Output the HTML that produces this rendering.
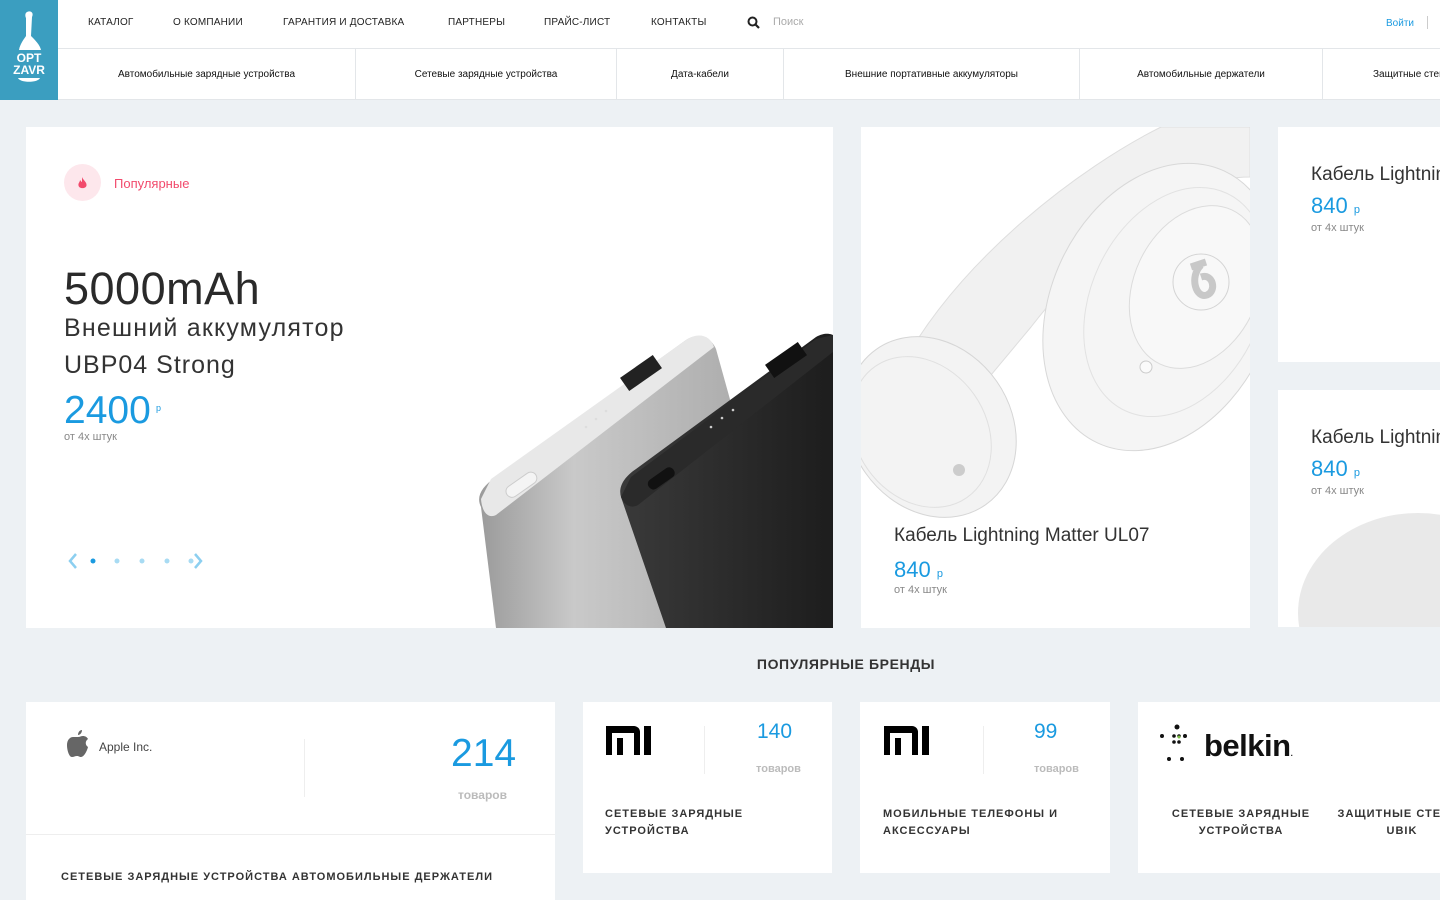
<!DOCTYPE html>
<html><head><meta charset="utf-8"><style>
*{margin:0;padding:0;box-sizing:border-box}
body{width:1440px;height:900px;overflow:hidden;background:#edf1f4;font-family:"Liberation Sans",sans-serif;position:relative;color:#333}
.a{position:absolute}
.hdr{left:0;top:0;width:1440px;height:100px;background:#fff;border-bottom:1px solid #e3e6e9}
.logo{left:0;top:0;width:58px;height:100px;background:#3b9ec0;color:#fff;font-weight:bold;font-size:12px;text-align:center;line-height:12px}
.nav{top:17px;font-size:10px;color:#222;letter-spacing:.2px}
.row2{left:58px;top:48px;width:1382px;height:51px;border-top:1px solid #e3e6e9}
.cat{top:0;height:51px;border-right:1px solid #e3e6e9;font-size:10px;color:#111;display:flex;align-items:center;justify-content:center}
.card{background:#fff}
.blue{color:#1a9ae0}
.small{font-size:11px;color:#888}
.bt{font-size:11px;font-weight:bold;letter-spacing:1px;color:#333;line-height:17px}
</style></head><body>
<div class="a hdr"></div>
<div class="a logo">
<svg class="a" style="left:14px;top:10px" width="30" height="42" viewBox="0 0 30 42"><path d="M13 2 C17 0 20 3 18 7 L17 26 C21 30 26 35 27 40 L5 40 C6 34 10 29 12 26 L12 8 C11 6 11 3 13 2Z" fill="#fff"/></svg>
<div class="a" style="left:0;top:52px;width:58px">OPT<br>ZAVR</div>
<svg class="a" style="left:18px;top:77px" width="22" height="8"><path d="M0 1 L22 1 C20 6 2 6 0 1Z" fill="#fff"/></svg>
</div>
<div class="a nav" style="left:88px">КАТАЛОГ</div>
<div class="a nav" style="left:173px">О КОМПАНИИ</div>
<div class="a nav" style="left:283px">ГАРАНТИЯ И ДОСТАВКА</div>
<div class="a nav" style="left:448px">ПАРТНЕРЫ</div>
<div class="a nav" style="left:544px">ПРАЙС-ЛИСТ</div>
<div class="a nav" style="left:651px">КОНТАКТЫ</div>
<svg class="a" style="left:747px;top:16px" width="14" height="14"><circle cx="5.5" cy="5.5" r="4" stroke="#222" stroke-width="2" fill="none"/><path d="M8.5 8.5 L12 12" stroke="#222" stroke-width="2.2"/></svg>
<div class="a" style="left:773px;top:16px;font-size:11px;color:#aaa">Поиск</div>
<div class="a" style="left:1386px;top:18px;font-size:10px;color:#1a9ae0">Войти</div>
<div class="a" style="left:1427px;top:16px;width:1px;height:13px;background:#ccc"></div>
<div class="a row2">
<div class="a cat" style="left:0;width:298px">Автомобильные зарядные устройства</div>
<div class="a cat" style="left:298px;width:261px">Сетевые зарядные устройства</div>
<div class="a cat" style="left:559px;width:167px">Дата-кабели</div>
<div class="a cat" style="left:726px;width:296px">Внешние портативные аккумуляторы</div>
<div class="a cat" style="left:1022px;width:243px">Автомобильные держатели</div>
<div class="a cat" style="left:1265px;width:160px;border:none;justify-content:flex-start;padding-left:50px;white-space:nowrap">Защитные стекла</div>
</div>

<div class="a card" style="left:26px;top:127px;width:807px;height:501px;overflow:hidden">
<div class="a" style="left:38px;top:37px;width:37px;height:37px;border-radius:50%;background:#fde7ec"></div>
<svg class="a" style="left:51px;top:49px" width="11" height="14"><path d="M5 1 C6 4 10 6 9.5 9.5 C9 13 2 13 1.5 9.5 C1 7 3 6 3 4 C4 5 4.5 6 5 6 C5 4 5 3 5 1Z" fill="#f24a6c"/></svg>
<div class="a" style="left:88px;top:49px;font-size:13px;color:#f24a6c">Популярные</div>
<div class="a" style="left:38px;top:136px;font-size:45px;color:#2a2a2a;letter-spacing:.5px">5000mAh</div>
<div class="a" style="left:38px;top:187px;font-size:25px;color:#333;letter-spacing:1.2px">Внешний аккумулятор</div>
<div class="a" style="left:38px;top:224px;font-size:25px;color:#333;letter-spacing:1px">UBP04 Strong</div>
<div class="a blue" style="left:38px;top:262px;font-size:39px">2400</div>
<div class="a blue" style="left:130px;top:276px;font-size:9px">р</div>
<div class="a small" style="left:38px;top:304px">от 4х штук</div>
<svg class="a" style="left:40px;top:425px" width="140" height="18"><path d="M10 2 L4 9 L10 16" stroke="#8ccff0" stroke-width="2.5" fill="none"/><circle cx="27" cy="9" r="2.5" fill="#1a9ae0"/><circle cx="51" cy="9" r="2.5" fill="#a8dbf3"/><circle cx="76" cy="9" r="2.5" fill="#a8dbf3"/><circle cx="101" cy="9" r="2.5" fill="#a8dbf3"/><circle cx="125" cy="9" r="2.5" fill="#a8dbf3"/><path d="M129 2 L135 9 L129 16" stroke="#8ccff0" stroke-width="2.5" fill="none"/></svg>
<svg class="a" style="left:440px;top:180px" width="367" height="321" viewBox="440 180 367 321">
<defs><linearGradient id="s" x1="0" x2="1"><stop offset="0" stop-color="#9a9a9a"/><stop offset=".3" stop-color="#c9c9c9"/><stop offset="1" stop-color="#a3a3a3"/></linearGradient>
<linearGradient id="k" x1="0" x2="1"><stop offset="0" stop-color="#3a3a3a"/><stop offset="1" stop-color="#1d1d1d"/></linearGradient></defs>
<path d="M455 380 C450 370 455 360 470 350 L660 213 C672 205 685 210 690 222 L720 330 L770 501 L470 501 Z" fill="url(#s)"/>
<path d="M455 372 L465 352 L660 213 C672 205 684 208 688 220 L470 388 C462 392 456 385 455 372Z" fill="#e8e8e8"/>
<path d="M595 370 C592 360 598 350 610 342 L790 210 C800 204 807 208 807 208 L807 501 L640 501 Z" fill="url(#k)"/>
<path d="M595 370 L605 350 L790 212 L807 208 L807 225 L612 378 C605 382 598 378 595 370Z" fill="#2a2a2a"/>
<rect x="620" y="346" width="30" height="11" rx="5" transform="rotate(-35 635 351)" fill="#111"/>
<rect x="740" y="225" width="40" height="16" transform="rotate(-35 760 233)" fill="#111"/>
<rect x="595" y="238" width="40" height="16" transform="rotate(-35 615 246)" fill="#222"/>
<rect x="478" y="352" width="35" height="12" rx="6" transform="rotate(-35 495 358)" fill="#f4f4f4" stroke="#ccc"/>
<g fill="#ddd"><circle cx="560" cy="300" r="1.3"/><circle cx="570" cy="292" r="1.3"/><circle cx="580" cy="284" r="1.3"/></g>
<g fill="#ccc"><circle cx="685" cy="300" r="1.3"/><circle cx="696" cy="291" r="1.3"/><circle cx="707" cy="283" r="1.3"/></g>
</svg>
</div>

<div class="a card" style="left:861px;top:127px;width:389px;height:501px;overflow:hidden">
<svg class="a" style="left:0;top:0" width="389" height="400" viewBox="0 0 389 400">
<path d="M40 240 C100 130 220 40 300 0 L389 0 L389 50 C320 50 240 110 170 200 L120 260 Z" fill="#f1f1f1" stroke="#dedede"/>
<ellipse cx="300" cy="180" rx="110" ry="150" transform="rotate(25 300 180)" fill="#f5f5f5" stroke="#d8d8d8"/>
<ellipse cx="315" cy="175" rx="85" ry="120" transform="rotate(25 315 175)" fill="none" stroke="#e2e2e2"/>
<ellipse cx="335" cy="160" rx="62" ry="85" transform="rotate(25 335 160)" fill="#f8f8f8" stroke="#dcdcdc"/>
<circle cx="340" cy="155" r="28" fill="none" stroke="#d4d4d4" stroke-width="1"/>
<path d="M330 140 L345 135 M340 138 C328 150 335 172 346 168 C356 164 352 146 340 150" fill="none" stroke="#c8c8c8" stroke-width="7"/>
<circle cx="285" cy="240" r="6" fill="#fafafa" stroke="#ccc"/>
<ellipse cx="70" cy="300" rx="80" ry="95" transform="rotate(-35 70 300)" fill="#f3f3f3" stroke="#d6d6d6"/>
<ellipse cx="60" cy="305" rx="65" ry="80" transform="rotate(-35 60 305)" fill="none" stroke="#e0e0e0"/>
<circle cx="98" cy="343" r="6" fill="#ccc"/>
</svg>
<div class="a" style="left:33px;top:398px;font-size:19px;color:#333">Кабель Lightning Matter UL07</div>
<div class="a blue" style="left:33px;top:430px;font-size:22px">840 <span style="font-size:11px">р</span></div>
<div class="a small" style="left:33px;top:457px">от 4х штук</div>
</div>

<div class="a card" style="left:1278px;top:127px;width:162px;height:235px">
<div class="a" style="left:33px;top:37px;font-size:19px;white-space:nowrap">Кабель Lightning</div>
<div class="a blue" style="left:33px;top:66px;font-size:22px">840 <span style="font-size:11px">р</span></div>
<div class="a small" style="left:33px;top:95px">от 4х штук</div>
</div>
<div class="a card" style="left:1278px;top:390px;width:162px;height:237px;overflow:hidden">
<div class="a" style="left:33px;top:37px;font-size:19px;white-space:nowrap">Кабель Lightning</div>
<div class="a blue" style="left:33px;top:66px;font-size:22px">840 <span style="font-size:11px">р</span></div>
<div class="a small" style="left:33px;top:95px">от 4х штук</div>
<div class="a" style="left:20px;top:123px;width:240px;height:200px;border-radius:50%;background:#e9e9e9"></div>
</div>

<div class="a" style="left:0;top:656px;width:1692px;text-align:center;font-size:14px;font-weight:bold;color:#333;letter-spacing:.6px">ПОПУЛЯРНЫЕ БРЕНДЫ</div>

<div class="a card" style="left:26px;top:702px;width:529px;height:198px">
<svg class="a" style="left:41px;top:28px" width="22" height="28" viewBox="0 0 22 28"><path d="M15 0 C15 3 13 5 11 5 C11 2 13 0 15 0Z M11 7 C13 7 14 6 16 6 C18 6 20 7 21 9 C18 11 18 15 21 17 C20 21 17 27 14 27 C12 27 12 26 10 26 C8 26 7 27 5 27 C2 27 0 20 0 15 C0 10 3 7 6 7 C8 7 9 7 11 7Z" fill="#666"/></svg>
<div class="a" style="left:73px;top:38px;font-size:12px;color:#444">Apple Inc.</div>
<div class="a" style="left:278px;top:37px;width:1px;height:58px;background:#eee"></div>
<div class="a blue" style="left:425px;top:30px;font-size:39px">214</div>
<div class="a" style="left:432px;top:86px;font-size:12px;font-weight:bold;color:#bbb">товаров</div>
<div class="a" style="left:0;top:132px;width:529px;height:1px;background:#eee"></div>
<div class="a bt" style="left:35px;top:167px">СЕТЕВЫЕ ЗАРЯДНЫЕ УСТРОЙСТВА АВТОМОБИЛЬНЫЕ ДЕРЖАТЕЛИ</div>
</div>

<div class="a card" style="left:583px;top:702px;width:249px;height:171px">
<svg class="a" style="left:23px;top:24px" width="46" height="29"><path d="M0 0 H28 A6 6 0 0 1 34 6 V29 H28 V7 H6 V29 H0Z M11 12 H17 V29 H11Z M38 0 H45 V29 H38Z" fill="#000"/></svg>
<div class="a" style="left:121px;top:24px;width:1px;height:48px;background:#eee"></div>
<div class="a blue" style="left:174px;top:18px;font-size:21px">140</div>
<div class="a" style="left:173px;top:61px;font-size:11px;font-weight:bold;color:#bbb">товаров</div>
<div class="a bt" style="left:22px;top:104px">СЕТЕВЫЕ ЗАРЯДНЫЕ<br>УСТРОЙСТВА</div>
</div>

<div class="a card" style="left:860px;top:702px;width:250px;height:171px">
<svg class="a" style="left:24px;top:24px" width="46" height="29"><path d="M0 0 H28 A6 6 0 0 1 34 6 V29 H28 V7 H6 V29 H0Z M11 12 H17 V29 H11Z M38 0 H45 V29 H38Z" fill="#000"/></svg>
<div class="a" style="left:123px;top:24px;width:1px;height:48px;background:#eee"></div>
<div class="a blue" style="left:174px;top:18px;font-size:21px">99</div>
<div class="a" style="left:174px;top:61px;font-size:11px;font-weight:bold;color:#bbb">товаров</div>
<div class="a bt" style="left:23px;top:104px">МОБИЛЬНЫЕ ТЕЛЕФОНЫ И<br>АКСЕССУАРЫ</div>
</div>

<div class="a card" style="left:1138px;top:702px;width:302px;height:171px">
<svg class="a" style="left:22px;top:22px" width="30" height="38"><g fill="#111"><circle cx="17" cy="3" r="2.5"/><circle cx="2" cy="12" r="2"/><circle cx="14" cy="12" r="1.8"/><circle cx="19" cy="12" r="1.8"/><circle cx="25" cy="12" r="2"/><circle cx="14" cy="18" r="1.8"/><circle cx="19" cy="18" r="1.8"/><circle cx="9" cy="35" r="2"/><circle cx="22" cy="35" r="2"/></g><circle cx="19" cy="13" r="1.5" fill="#7bc043"/></svg>
<div class="a" style="left:66px;top:26px;font-size:31px;font-weight:bold;color:#111;letter-spacing:-.5px">belkin<span style="font-size:8px">.</span></div>
<div class="a bt" style="left:30px;top:104px;text-align:center;width:146px">СЕТЕВЫЕ ЗАРЯДНЫЕ<br>УСТРОЙСТВА</div>
<div class="a bt" style="left:199px;top:104px;text-align:center;width:130px;white-space:nowrap">ЗАЩИТНЫЕ СТЕКЛА<br>UBIK</div>
</div>
</body></html>
